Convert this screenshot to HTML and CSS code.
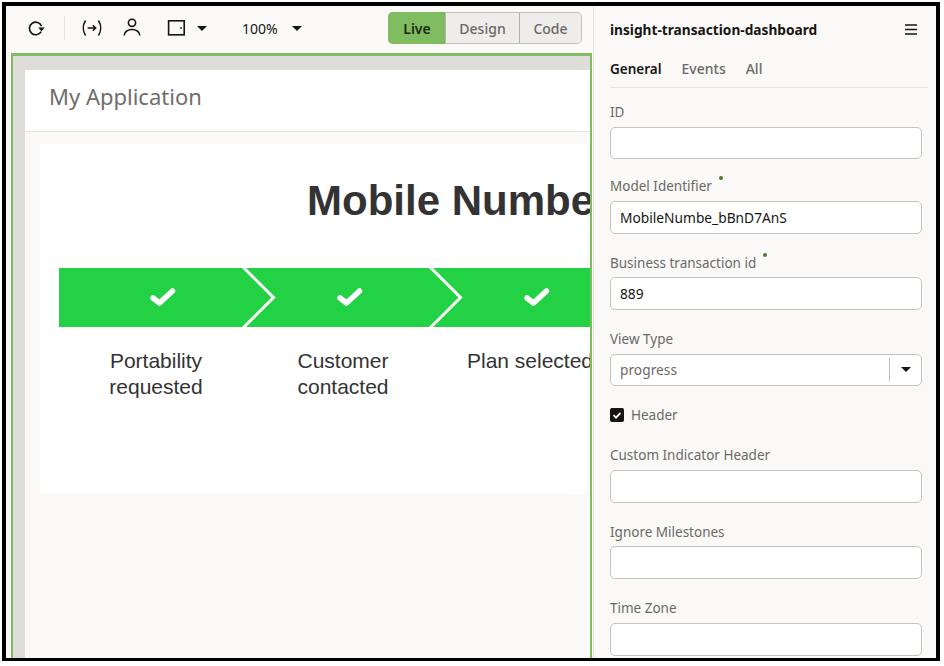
FILE: index.html
```html
<!DOCTYPE html>
<html lang="en">
<head>
<meta charset="utf-8">
<title>insight-transaction-dashboard</title>
<link rel="stylesheet" href="styles.css">
</head>
<body>
<div class="shot">
  <section class="workspace">
    <header class="toolbar">
      <svg class="icon refresh" viewBox="0 0 20 20"><path d="M15.6 8.2A6.3 6.3 0 1 0 15.2 13.6"/><path class="fill" d="M12.2 9.6h6.6l-3.3 3.6z"/></svg>
      <span class="sep"></span>
      <svg class="icon vars" viewBox="0 0 20 20"><path d="M3.6 2.500C.6 7 .6 13 3.600 17.500M16.400 2.500c3 4.500 3 10.500 0 15M5.600 10h8M10.800 7.200 13.600 10l-2.800 2.800"/></svg>
      <svg class="icon person" viewBox="0 0 20 20"><circle cx="10" cy="4.800" r="3.600"/><path d="M2.200 17.500C2.200 9.500 17.800 9.500 17.800 17.500"/></svg>
      <svg class="icon device" viewBox="0 0 20 20"><rect x="2.600" y="2.800" width="15.600" height="14" /><circle class="fill" cx="15" cy="10" r=".9"/></svg>
      <span class="caret caret-device"></span>
      <span class="zoom">100%</span>
      <span class="caret caret-zoom"></span>
      <div class="segments">
        <span class="segment active">Live</span>
        <span class="segment">Design</span>
        <span class="segment">Code</span>
      </div>
    </header>
    <div class="frame">
      <div class="app">
        <div class="app-header">My Application</div>
        <div class="app-body">
          <div class="card">
            <h1 class="card-title">Mobile Number</h1>
            <svg class="track" viewBox="0 0 620 59" width="620" height="59">
              <rect class="track-bg" width="620" height="59"/>
              <path class="chevron" d="M184 -1 214.500 29.500 184 60M371 -1 401.500 29.500 371 60"/>
              <path class="tick" d="M94 30 100.500 35 113.500 23M281 30 287.500 35 300.500 23M468 30 474.500 35 487.500 23"/>
            </svg>
            <div class="milestones">
              <div class="milestone">Portability<br>requested</div>
              <div class="milestone">Customer<br>contacted</div>
              <div class="milestone">Plan selected</div>
            </div>
          </div>
        </div>
      </div>
    </div>
  </section>
  <aside class="panel">
    <div class="panel-head">
      <span class="panel-title">insight-transaction-dashboard</span>
      <svg class="menu" viewBox="0 0 12 11"><path d="M0 1h12M0 5.500h12M0 10h12"/></svg>
    </div>
    <nav class="tabs">
      <span class="tab current">General</span>
      <span class="tab">Events</span>
      <span class="tab">All</span>
    </nav>
    <div class="field field-first">
      <div class="label">ID</div>
      <div class="input"></div>
    </div>
    <div class="field">
      <div class="label">Model Identifier<i class="req"></i></div>
      <div class="input">MobileNumbe_bBnD7AnS</div>
    </div>
    <div class="field">
      <div class="label">Business transaction id<i class="req"></i></div>
      <div class="input">889</div>
    </div>
    <div class="field field-select">
      <div class="label">View Type</div>
      <div class="input select"><span class="select-value">progress</span><span class="select-btn"><span class="caret"></span></span></div>
    </div>
    <div class="check-row">
      <span class="checkbox"><svg viewBox="0 0 14 14"><path d="M3.500 7.200 6 9.700 10.500 4.800"/></svg></span>
      <span class="check-label">Header</span>
    </div>
    <div class="field">
      <div class="label">Custom Indicator Header</div>
      <div class="input"></div>
    </div>
    <div class="field">
      <div class="label">Ignore Milestones</div>
      <div class="input"></div>
    </div>
    <div class="field">
      <div class="label">Time Zone</div>
      <div class="input"></div>
    </div>
  </aside>
</div>
</body>
</html>
```
FILE: styles.css
```css
* { box-sizing: border-box; }
html, body { margin: 0; padding: 0; background: #fff; }
body { width: 944px; height: 666px; overflow: hidden; font-family: "Noto Sans", sans-serif; color: #161513; }

.shot {
  display: flex;
  width: 938px;
  height: 659px;
  margin: 2px 0 0 2px;
  border: 4px solid #000;
  border-bottom-width: 3px;
  background: #faf9f7;
  overflow: hidden;
}

.workspace { width: 587px; flex: none; display: flex; flex-direction: column; }

.toolbar {
  height: 47px;
  flex: none;
  display: flex;
  align-items: center;
  padding: 0 11px 3px 20px;
}
.icon { width: 20px; height: 20px; flex: none; fill: none; stroke: #161513; stroke-width: 1.600; }
.icon .fill { fill: #161513; stroke: none; }
.sep { width: 1px; height: 24px; background: #e4e2de; margin-left: 18px; }
.vars { margin-left: 17px; }
.person { margin-left: 20px; }
.device { margin-left: 24px; }
.caret {
  display: block;
  width: 0;
  height: 0;
  flex: none;
  border-left: 5px solid transparent;
  border-right: 5px solid transparent;
  border-top: 5px solid #161513;
}
.caret-device { margin-left: 11px; }
.zoom { margin-left: 35px; font-size: 14px; width: 37px; }
.caret-zoom { margin-left: 13px; }

.segments {
  margin-left: auto;
  display: flex;
  height: 32px;
  width: 194px;
  border-radius: 5px;
  background: #eeedeb;
  font-size: 14px;
  overflow: hidden;
}
.segment {
  display: flex;
  align-items: center;
  justify-content: center;
  color: #6b6966;
  font-weight: 500;
  border: 1px solid #c4c2be;
  border-left-color: #b4b2ae;
  border-right: 0;
}
.segment:nth-child(1) { width: 57px; }
.segment:nth-child(2) { width: 74px; }
.segment:nth-child(3) { flex: 1; border-right: 1px solid #c4c2be; border-radius: 0 5px 5px 0; }
.segment.active { background: #7fbc60; color: #1c2a14; font-weight: 600; border-color: #7fbc60; }

.frame {
  flex: 1;
  min-height: 0;
  margin: 0 1px 0 5px;
  padding: 14px 0 0 12px;
  border: solid #7fbc60;
  border-width: 3px 2.500px 0;
  background: #dfddd9;
  overflow: hidden;
}
.app { height: 100%; background: #faf9f7; overflow: hidden; }
.app-header {
  height: 62px;
  padding: 0 0 9px 24px;
  display: flex;
  align-items: center;
  background: #fff;
  border-bottom: 1px solid #e8e6e3;
  font-size: 22px;
  color: #6f6d6a;
}
.app-body { padding: 12px 0 0 15px; }
.card {
  width: 700px;
  height: 350px;
  padding: 33px 0 0 19px;
  background: #fff;
  font-family: "Liberation Sans", Arial, sans-serif;
  color: #333;
}
.card-title {
  margin: 0 0 43px;
  padding-left: 248px;
  font-size: 42px;
  line-height: 48px;
  font-weight: 700;
  white-space: nowrap;
}
.track { display: block; }
.track-bg { fill: #22d244; }
.chevron { fill: none; stroke: #fff; stroke-width: 3; }
.tick { fill: none; stroke: #fff; stroke-width: 5.500; stroke-linecap: round; stroke-linejoin: round; }
.milestones { display: flex; margin: 21px 0 0 3.500px; }
.milestone { width: 187px; flex: none; text-align: center; font-size: 21px; line-height: 26px; }

.panel {
  width: 343px;
  flex: none;
  padding: 0 14px 0 16px;
  border-left: 1px solid #e6e4e0;
}
.panel-head {
  height: 47px;
  display: flex;
  align-items: center;
  justify-content: space-between;
  padding-right: 5px;
}
.panel-title { font-size: 13.700px; font-weight: 700; color: #161513; }
.menu { width: 12px; height: 11px; fill: none; stroke: #161513; stroke-width: 1.300; }
.tabs {
  height: 35px;
  display: flex;
  align-items: center;
  gap: 20px;
  margin-right: -6px;
  padding-bottom: 3px;
  border-bottom: 1px solid #e6e4e0;
  font-size: 14px;
  color: #6b6966;
  font-weight: 500;
}
.tab.current { color: #161513; font-weight: 600; font-size: 13.500px; }

.field { margin-bottom: 19px; }
.field-first { margin-top: 14px; margin-bottom: 17px; }
.label { height: 20px; margin-bottom: 4.500px; font-size: 13.500px; line-height: 20px; color: #6b6966; }
.field-first .input { height: 32px; }
.field-first .label { margin-bottom: 5px; }
.req {
  display: inline-block;
  width: 4px;
  height: 4px;
  margin-left: 7px;
  vertical-align: top;
  border-radius: 50%;
  background: #4c7a36;
}
.input {
  height: 33px;
  padding: 0 9px;
  display: flex;
  align-items: center;
  background: #fff;
  border: 1px solid #c6c4c0;
  border-radius: 5px;
  font-size: 13.750px;
  color: #161513;
}
.select { height: 32px; padding-right: 0; justify-content: space-between; }
.select-value { color: #6b6966; }
.select-btn {
  width: 32px;
  height: 23px;
  display: flex;
  align-items: center;
  justify-content: center;
  border-left: 1px solid #bdbbb7;
}
.field-select { margin-bottom: 22.500px; }
.check-row { display: flex; align-items: center; height: 14px; gap: 7px; margin-bottom: 23px; }
.checkbox { width: 14px; height: 14px; border-radius: 2px; background: #161513; display: block; }
.checkbox svg { display: block; width: 14px; height: 14px; fill: none; stroke: #fff; stroke-width: 1.800; }
.check-label { font-size: 13.500px; color: #6b6966; }
```
